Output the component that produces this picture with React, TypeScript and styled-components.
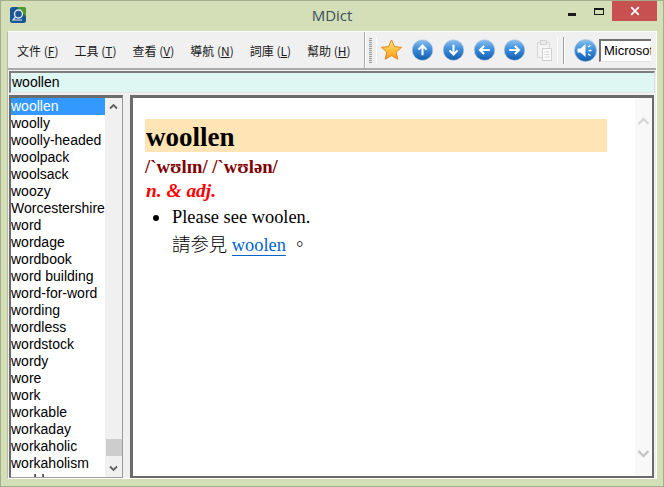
import React from 'react';
import styled, { createGlobalStyle } from 'styled-components';

const GlobalStyle = createGlobalStyle`
  html, body { margin: 0; padding: 0; overflow: hidden; }
  body { font-family: "Liberation Sans", Arial, sans-serif; }
`;

const Window = styled.div`
  width: 664px;
  height: 487px;
  box-sizing: border-box;
  border: 1px solid #a3ae8c;
  background: #d4dfb8;
  display: flex;
  flex-direction: column;
`;

const TitleBar = styled.div`
  height: 30px;
  flex-shrink: 0;
  display: grid;
  grid-template-columns: 1fr auto 1fr;
  align-items: start;
`;

const Logo = styled.svg`
  width: 16px;
  height: 16px;
  margin: 6px 0 0 9px;
`;

const Title = styled.div`
  font-family: "Open Sans", "Noto Sans", sans-serif;
  font-size: 15px;
  line-height: 20px;
  margin-top: 4px;
  color: #3c4f58;
`;

const Controls = styled.div`
  display: flex;
  justify-content: flex-end;
  align-items: flex-start;
  padding-right: 6px;
`;

const MinButton = styled.div`
  width: 8px;
  height: 3px;
  background: #1a1a1a;
  margin: 12px 18px 0 0;
`;

const MaxButton = styled.div`
  width: 8px;
  height: 4px;
  border: 1px solid #1a1a1a;
  border-top-width: 2px;
  margin: 7px 8px 0 0;
`;

const CloseButton = styled.div`
  width: 45px;
  height: 20px;
  background: #c75050;
  color: #fff;
  display: flex;
  align-items: center;
  justify-content: center;
`;

const Client = styled.div`
  flex: 1;
  margin: 0 6px 7px 6px;
  background: #f0f0f0;
  border-top: 1px solid #fbfbfb;
  border-left: 1px solid #b5bba5;
  border-right: 1px solid #fff;
  border-bottom: 1px solid #fff;
  display: flex;
  flex-direction: column;
  min-height: 0;
`;

const Toolbar = styled.div`
  height: 36px;
  flex-shrink: 0;
  display: flex;
  align-items: center;
  border-bottom: 2px solid #a9a9a9;
`;

const MenuBar = styled.div`
  width: 357px;
  height: 36px;
  box-sizing: border-box;
  border-right: 1px solid #a9a9a9;
  box-shadow: 1px 0 0 #fff;
  display: flex;
  align-items: center;
  padding-left: 9px;
  gap: 16px;
  flex-shrink: 0;
`;

const MenuItem = styled.span`
  font-family: "Noto Sans CJK TC", "Liberation Sans", sans-serif;
  font-size: 12px;
  color: #1a1a1a;
  white-space: nowrap;
  u { text-underline-offset: 1px; }
`;

const Grip = styled.div`
  width: 3px;
  height: 25px;
  margin: 0 4px 0 4px;
  background: repeating-linear-gradient(to bottom, #9c9c9c 0 1px, #e6e6e6 1px 2px);
`;

const IconDivider = styled.div`
  width: 1px;
  height: 27px;
  background: #fcfcfc;
`;

const IconRow = styled.div`
  display: flex;
  align-items: center;
  flex: 1;
  min-width: 0;
`;

const ToolIcon = styled.svg<{ $gap?: number }>`
  flex-shrink: 0;
  margin-left: ${(p) => p.$gap ?? 0}px;
`;

const ClipDivider = styled(IconDivider)`
  margin-left: 4px;
`;

const ToolSeparator = styled.div`
  width: 1px;
  height: 27px;
  background: #a0a0a0;
  margin: 0 10px 0 5px;
  box-shadow: 1px 0 0 #fff;
`;

const FontBox = styled.div`
  width: 52px;
  height: 23px;
  box-sizing: border-box;
  margin-left: 2px;
  background: #fff;
  border-left: 2px solid #707070;
  border-top: 2px solid #707070;
  border-bottom: 1px solid #e0e0e0;
  font-size: 13px;
  line-height: 19px;
  color: #000;
  overflow: hidden;
  white-space: nowrap;
  padding-left: 3px;
`;

const SearchBox = styled.div`
  height: 22px;
  flex-shrink: 0;
  margin: 1px 0 0 1px;
  width: 646px;
  box-sizing: border-box;
  background: #dff7f3;
  border-top: 2px solid #7d7d7d;
  border-left: 2px solid #7d7d7d;
  border-right: 1px solid #dcdcdc;
  border-bottom: 1px solid #e4e4e4;
  font-size: 14px;
  line-height: 18px;
  padding-left: 1px;
  color: #000;
`;

const Panes = styled.div`
  flex: 1;
  min-height: 0;
  display: grid;
  grid-template-columns: 114px 524px;
  column-gap: 7px;
  padding: 2px 0 0 1px;
`;

const WordPane = styled.div`
  box-sizing: border-box;
  border: 2px solid #6b6b6b;
  border-top-width: 3px;
  border-right: 1px solid #9b9b9b;
  border-bottom: 1px solid #a0a0a0;
  background: #fff;
  display: flex;
  min-height: 0;
  overflow: hidden;
  position: relative;
`;

const WordList = styled.ul`
  list-style: none;
  margin: 0;
  padding: 0;
  width: 94px;
  overflow: hidden;
`;

const WordRow = styled.li<{ $selected?: boolean }>`
  height: 17px;
  line-height: 17px;
  font-size: 14px;
  white-space: nowrap;
  color: ${(p) => (p.$selected ? '#fff' : '#000')};
  background: ${(p) => (p.$selected ? '#3399ff' : 'transparent')};
`;

const ListScroll = styled.div`
  width: 17px;
  background: #f0f0f0;
  display: flex;
  flex-direction: column;
  justify-content: space-between;
  align-items: center;
  position: relative;
`;

const ScrollThumb = styled.div`
  position: absolute;
  left: 1px;
  right: 0;
  bottom: 21px;
  height: 17px;
  background: #cdcdcd;
`;

const ScrollArrow = styled.svg`
  width: 9px;
  height: 7px;
  margin: 5px 0;
`;

const ArticlePane = styled.div`
  box-sizing: border-box;
  border: 2px solid #6b6b6b;
  border-top-width: 3px;
  border-left-width: 3px;
  background: #fff;
  display: flex;
  min-height: 0;
`;

const Article = styled.div`
  flex: 1;
  padding: 21px 28px 0 12px;
  font-family: "Liberation Serif", "Noto Serif", serif;
`;

const Headword = styled.h1`
  margin: 0;
  height: 33px;
  background: #ffe4b5;
  font-size: 27px;
  line-height: 37px;
  font-weight: bold;
  padding-left: 1px;
  color: #000;
`;

const Phonetic = styled.div`
  font-size: 18.7px;
  font-weight: bold;
  color: #800000;
  line-height: 20px;
  margin-top: 5px;
`;

const PartOfSpeech = styled.div`
  font-size: 19.4px;
  font-weight: bold;
  font-style: italic;
  color: #ff0000;
  line-height: 20px;
  margin-top: 4px;
  padding-left: 1px;
`;

const Senses = styled.ul`
  list-style: none;
  margin: 2px 0 0;
  padding: 0 0 0 27px;
  font-size: 18.4px;
  line-height: 28px;
  color: #000;
`;

const Sense = styled.li`
  position: relative;

  &::before {
    content: "";
    position: absolute;
    left: -19px;
    top: 12px;
    width: 6px;
    height: 6px;
    border-radius: 50%;
    background: #000;
  }
`;

const CjkLine = styled.div`
  font-family: "Liberation Serif", "Noto Sans CJK TC", serif;
  font-weight: 300;
`;

const Link = styled.a`
  color: #0066cc;
  text-decoration: none;
  border-bottom: 1px solid #0066cc;
`;

const ArticleScroll = styled.div`
  width: 17px;
  background: #f8f8f8;
  display: flex;
  flex-direction: column;
  justify-content: space-between;
  align-items: center;
  padding: 18px 0 17px;
  box-sizing: border-box;
`;

const FadedArrow = styled.svg`
  width: 13px;
  height: 10px;
`;

const WORDS = [
  'woollen', 'woolly', 'woolly-headed', 'woolpack', 'woolsack', 'woozy', 'Worcestershire', 'word',
  'wordage', 'wordbook', 'word building', 'word-for-word', 'wording', 'wordless', 'wordstock', 'wordy',
  'wore', 'work', 'workable', 'workaday', 'workaholic', 'workaholism', 'world',
];

const MENUS: [string, string][] = [
  ['文件', 'F'], ['工具', 'T'], ['查看', 'V'], ['導航', 'N'], ['詞庫', 'L'], ['幫助', 'H'],
];

const Gradients = () => (
  <svg width="0" height="0" style={{ position: 'absolute' }}>
    <defs>
      <linearGradient id="ball" x1="0" y1="0" x2="0" y2="1">
        <stop offset="0" stopColor="#8cc0ee" />
        <stop offset="0.45" stopColor="#3f8fdc" />
        <stop offset="1" stopColor="#0f5cae" />
      </linearGradient>
      <linearGradient id="star" x1="0" y1="0" x2="0" y2="1">
        <stop offset="0" stopColor="#ffe98a" />
        <stop offset="0.6" stopColor="#fdbb33" />
        <stop offset="1" stopColor="#f99a1c" />
      </linearGradient>
    </defs>
  </svg>
);

const NavBall = ({ rotate, gap }: { rotate: number; gap: number }) => (
  <ToolIcon $gap={gap} width="21" height="22" viewBox="0 0 22 23">
    <circle cx="11" cy="11.5" r="10.8" fill="url(#ball)" stroke="#b9c9d8" strokeWidth="0.6" />
    <path
      d="M11 17V7M6.8 11.1L11 6.8l4.2 4.3"
      fill="none"
      stroke="#fff"
      strokeWidth="2.2"
      transform={`rotate(${rotate} 11 11.5)`}
    />
  </ToolIcon>
);

const App: React.FC = () => (
  <>
    <GlobalStyle />
    <Gradients />
    <Window>
      <TitleBar>
        <Logo viewBox="0 0 16 16">
          <rect width="16" height="16" rx="2.5" fill="#1c5596" />
          <path d="M7 0h6.5A2.5 2.5 0 0 1 16 2.5V10z" fill="#4f9a2c" />
          <circle cx="8.5" cy="7" r="4" fill="none" stroke="#dfe9f4" strokeWidth="1.4" />
          <path d="M5.5 10L3 13h9" fill="none" stroke="#dfe9f4" strokeWidth="1.2" />
        </Logo>
        <Title>MDict</Title>
        <Controls>
          <MinButton />
          <MaxButton />
          <CloseButton>
            <svg width="10" height="10" viewBox="0 0 10 10">
              <path d="M1.2 1.2l7.6 7.6M8.8 1.2L1.2 8.8" stroke="#fff" strokeWidth="1.8" />
            </svg>
          </CloseButton>
        </Controls>
      </TitleBar>
      <Client>
        <Toolbar>
          <MenuBar>
            {MENUS.map(([label, key]) => (
              <MenuItem key={key}>
                {label} (<u>{key}</u>)
              </MenuItem>
            ))}
          </MenuBar>
          <Grip />
          <IconRow>
            <IconDivider />
            <ToolIcon $gap={3} width="23" height="24" viewBox="0 0 24 24">
              <path
                d="M12 1.5l3.1 7 7.4.7-5.6 5 1.7 7.5L12 17.8l-6.6 3.9 1.7-7.5-5.6-5 7.4-.7z"
                fill="url(#star)"
                stroke="#e5811a"
                strokeWidth="1"
                strokeLinejoin="round"
              />
            </ToolIcon>
            <NavBall rotate={0} gap={9} />
            <NavBall rotate={180} gap={10} />
            <NavBall rotate={-90} gap={10} />
            <NavBall rotate={90} gap={9} />
            <ToolIcon $gap={11} width="17" height="23" viewBox="0 0 17 23">
              <path d="M1.5 3.5h12v15h-12z" fill="#f4f4f4" stroke="#d6d6d6" />
              <path d="M4.5 1.5h6v4h-6z" fill="#ececec" stroke="#d0d0d0" />
              <path d="M6.5 9.5h9v12h-9z" fill="#fafafa" stroke="#cfcfcf" />
              <path d="M8.5 13h5M8.5 15.5h5M8.5 18h5" stroke="#d8d8d8" />
            </ToolIcon>
            <ClipDivider />
            <ToolSeparator />
            <ToolIcon width="23" height="23" viewBox="0 0 23 23">
              <circle cx="11.5" cy="11.5" r="11" fill="url(#ball)" stroke="#b9c9d8" strokeWidth="0.6" />
              <path d="M3.5 9.5h3l5-4.5v13l-5-4.5h-3z" fill="#fff" />
              <path d="M14 8l2.5-1.5M14.5 11.5h3M14 15l2.5 1.5" stroke="#fff" strokeWidth="1.4" />
            </ToolIcon>
            <FontBox>Microsoft Sans Serif</FontBox>
          </IconRow>
        </Toolbar>
        <SearchBox>woollen</SearchBox>
        <Panes>
          <WordPane>
            <WordList>
              {WORDS.map((word, i) => (
                <WordRow key={word} $selected={i === 0}>
                  {word}
                </WordRow>
              ))}
            </WordList>
            <ListScroll>
              <ScrollArrow viewBox="0 0 9 7">
                <path d="M1 5.5L4.5 2 8 5.5" fill="none" stroke="#606060" strokeWidth="1.8" />
              </ScrollArrow>
              <ScrollThumb />
              <ScrollArrow viewBox="0 0 9 7">
                <path d="M1 1.5L4.5 5 8 1.5" fill="none" stroke="#606060" strokeWidth="1.8" />
              </ScrollArrow>
            </ListScroll>
          </WordPane>
          <ArticlePane>
            <Article>
              <Headword>woollen</Headword>
              <Phonetic>/ˋwʊlɪn/ /ˋwʊlən/</Phonetic>
              <PartOfSpeech>n. &amp; adj.</PartOfSpeech>
              <Senses>
                <Sense>
                  Please see woolen.
                  <CjkLine>
                    請参見 <Link>woolen</Link> 。
                  </CjkLine>
                </Sense>
              </Senses>
            </Article>
            <ArticleScroll>
              <FadedArrow viewBox="0 0 13 10">
                <path d="M1.5 8L6.5 3l5 5" fill="none" stroke="#d8d8d8" strokeWidth="2.4" />
              </FadedArrow>
              <FadedArrow viewBox="0 0 13 10">
                <path d="M1.5 2l5 5 5-5" fill="none" stroke="#c4c4c4" strokeWidth="2.4" />
              </FadedArrow>
            </ArticleScroll>
          </ArticlePane>
        </Panes>
      </Client>
    </Window>
  </>
);

export default App;
